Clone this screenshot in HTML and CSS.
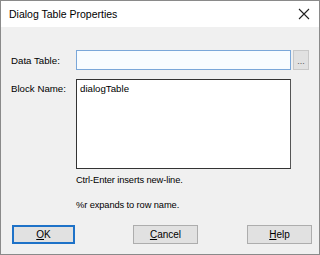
FILE: index.html
```html
<!DOCTYPE html>
<html>
<head>
<meta charset="utf-8">
<title>Dialog Table Properties</title>
<link rel="stylesheet" href="styles.css">
</head>
<body>
<div class="dialog">
  <div class="titlebar">
    <span class="title">Dialog Table Properties</span>
    <svg class="close" width="12" height="12" viewBox="0 0 12 12"><path d="M1 1L11 11M11 1L1 11" stroke="#222" stroke-width="1.1" fill="none"/></svg>
  </div>
  <div class="content">
    <div class="row">
      <label class="lbl">Data Table:</label>
      <div class="field input"></div>
      <div class="browse">...</div>
    </div>
    <div class="row block">
      <label class="lbl">Block Name:</label>
      <div class="field area">dialogTable</div>
    </div>
    <p class="note first">Ctrl-Enter inserts new-line.</p>
    <p class="note">%r expands to row name.</p>
    <div class="buttons">
      <div class="btn default"><u>O</u>K</div>
      <div class="btn cancel"><u>C</u>ancel</div>
      <div class="btn help"><u>H</u>elp</div>
    </div>
  </div>
</div>
</body>
</html>
```
FILE: styles.css
```css
body {
   margin: 0;
   background-color: white;
   font-family: "Liberation Sans", Arial, sans-serif;
}

.dialog {
   width: 318px;
   height: 253px;
   border: 1px solid #8a8a8a;
   background-color: #f0f0f0;
   display: flex;
   flex-direction: column;
}

.titlebar {
   height: 26px;
   background-color: white;
   display: flex;
   align-items: center;
   padding: 0 9px 0 8px;
   justify-content: space-between;
}

.title {
   font-size: 10.5px;
   color: #000;
}

.content {
   padding: 23px 0 0 10px;
   font-size: 9.7px;
   color: #000;
}

.row {
   display: flex;
   align-items: center;
}

.lbl {
   width: 65px;
}

.field {
   width: 213px;
   background-color: white;
}

.input {
   height: 18px;
   border: 1px solid #7aa7d9;
   background-color: #f8fcff;
}

.browse {
   width: 14px;
   height: 18px;
   margin-left: 2px;
   border: 1px solid #c8c8c8;
   background-color: #e1e1e1;
   color: #555;
   font-size: 9px;
   text-align: center;
   line-height: 20px;
}

.block {
   align-items: flex-start;
   margin-top: 9px;
}

.block .lbl {
   padding-top: 4px;
}

.area {
   height: 85px;
   border: 1px solid #333;
   border-right-color: #555;
   padding: 3px 0 0 3px;
   box-sizing: content-box;
   width: 210px;
}

.note {
   margin: 0 0 0 65px;
   font-size: 9.3px;
   letter-spacing: -0.1px;
}

.note.first {
   margin-top: 6px;
}

.note + .note {
   margin-top: 15px;
}

.buttons {
   display: flex;
   margin-top: 15px;
   padding-left: 1px;
}

.btn {
   width: 63px;
   height: 17px;
   border: 1px solid #adadad;
   background-color: #e1e1e1;
   text-align: center;
   line-height: 17px;
   font-size: 10px;
}

.btn.default {
   border: 2px solid #1e72c8;
   width: 59px;
   height: 15px;
   line-height: 15px;
}

.btn.cancel {
   margin-left: 58px;
}

.btn.help {
   margin-left: 49px;
}
```
